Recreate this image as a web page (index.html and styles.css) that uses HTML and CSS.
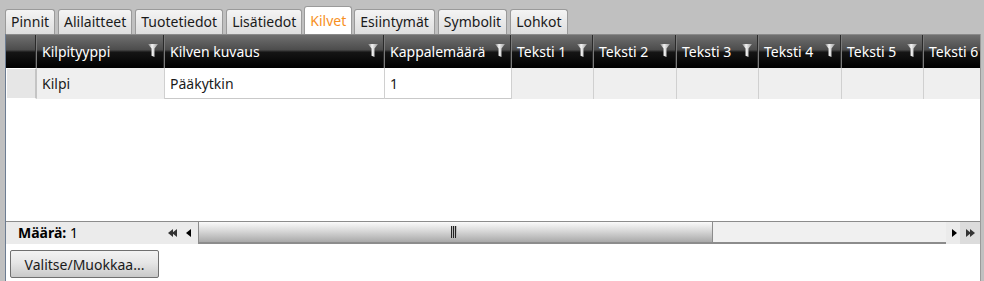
FILE: index.html
```html
<!DOCTYPE html>
<html lang="fi">
<head>
    <meta charset="UTF-8">
    <title>Kilvet</title>
    <link rel="stylesheet" href="styles.css">
</head>
<body>
<div class="window">
    <!-- tabs -->
    <div class="tabs">
        <div class="tab">Pinnit</div>
        <div class="tab">Alilaitteet</div>
        <div class="tab">Tuotetiedot</div>
        <div class="tab">Lisätiedot</div>
        <div class="tab active">Kilvet</div>
        <div class="tab">Esiintymät</div>
        <div class="tab">Symbolit</div>
        <div class="tab">Lohkot</div>
    </div>
    <div class="panel">
        <div class="grid">
            <div class="head-row">
                <div class="hcell"></div>
                <div class="hcell">Kilpityyppi<span class="filter"></span></div>
                <div class="hcell">Kilven kuvaus<span class="filter"></span></div>
                <div class="hcell">Kappalemäärä<span class="filter"></span></div>
                <div class="hcell">Teksti 1<span class="filter"></span></div>
                <div class="hcell">Teksti 2<span class="filter"></span></div>
                <div class="hcell">Teksti 3<span class="filter"></span></div>
                <div class="hcell">Teksti 4<span class="filter"></span></div>
                <div class="hcell">Teksti 5<span class="filter"></span></div>
                <div class="hcell">Teksti 6<span class="filter"></span></div>
            </div>
            <div class="data-row">
                <div class="cell indicator"></div>
                <div class="cell grey">Kilpi</div>
                <div class="cell">Pääkytkin</div>
                <div class="cell">1</div>
                <div class="cell grey"></div>
                <div class="cell grey"></div>
                <div class="cell grey"></div>
                <div class="cell grey"></div>
                <div class="cell grey"></div>
                <div class="cell grey"></div>
            </div>
            <div class="empty"></div>
            <div class="footer">
                <div class="count"><b>Määrä:</b> 1</div>
                <div class="sbtn first">
                    <svg width="10" height="8" viewBox="0 0 10 8"><path d="M0 4 L5 0 V8 Z M4 4 L9 0 V8 Z" fill="#333"/></svg>
                </div>
                <div class="sbtn">
                    <svg width="5" height="8" viewBox="0 0 5 8"><path d="M0 4 L5 0 V8 Z" fill="#000"/></svg>
                </div>
                <div class="track">
                    <div class="thumb"><span class="grip"></span></div>
                </div>
                <div class="sbtn">
                    <svg width="5" height="8" viewBox="0 0 5 8"><path d="M5 4 L0 0 V8 Z" fill="#000"/></svg>
                </div>
                <div class="sbtn last">
                    <svg width="10" height="8" viewBox="0 0 10 8"><path d="M10 4 L5 0 V8 Z M6 4 L1 0 V8 Z" fill="#333"/></svg>
                </div>
            </div>
        </div>
        <div class="actions">
            <button class="btn">Valitse/Muokkaa...</button>
        </div>
    </div>
</div>
</body>
</html>
```
FILE: styles.css
```css
body {
    margin: 0;
    font-family: "Segoe UI", "Noto Sans", "Open Sans", sans-serif;
    font-size: 14px;
    color: #1a1a1a;
}
.window {
    width: 984px;
    height: 281px;
    background: #c0c0c0;
    display: flex;
    flex-direction: column;
    padding-left: 5px;
    padding-right: 3px;
    box-sizing: border-box;
    overflow: hidden;
}
.tabs {
    height: 34px;
    display: flex;
    align-items: flex-end;
    gap: 3px;
    padding-left: 0;
    flex-shrink: 0;
}
.tab {
    height: 24px;
    line-height: 23px;
    padding: 0 5px;
    border: 1px solid #9a9a9a;
    border-bottom: none;
    border-radius: 3px 3px 0 0;
    background: linear-gradient(#f4f4f4, #dedede);
}
.tab.active {
    height: 27px;
    line-height: 28px;
    background: #fff;
    color: #f7901e;
    margin: 0 -1px;
}
.panel {
    flex: 1;
    background: #fff;
    border-left: 1px solid #6d7d92;
    border-right: 1px solid #9a9a9a;
    display: flex;
    flex-direction: column;
}
.grid {
    flex: 1;
    display: flex;
    flex-direction: column;
    overflow: hidden;
}
.head-row,
.data-row {
    display: grid;
    grid-template-columns: 31px 128px 220px 127px 82px 83px 82px 83px 82px 82px;
}
.head-row {
    height: 34px;
    background: linear-gradient(#707070 0%, #4c4c4c 45%, #151515 52%, #000 100%);
    border-top: 1px solid #8a8a8a;
    box-sizing: border-box;
}
.hcell {
    position: relative;
    color: #fff;
    line-height: 34px;
    padding-left: 5px;
    white-space: nowrap;
    border-right: 1px solid #7a7a7a;
    box-shadow: inset -1px 0 0 #2a2a2a;
    overflow: hidden;
}
.filter {
    position: absolute;
    right: 6px;
    top: 9px;
    width: 10px;
    height: 13px;
    background: linear-gradient(90deg, #7a7a7a, #f4f4f4 40%, #9a9a9a);
    clip-path: polygon(0 0, 100% 0, 65% 35%, 65% 100%, 35% 90%, 35% 35%);
}
.data-row {
    height: 31px;
    border-bottom: 1px solid #c9c9c9;
    box-sizing: border-box;
}
.cell {
    line-height: 31px;
    padding-left: 5px;
    border-right: 1px solid #d0d0d0;
    white-space: nowrap;
}
.cell.grey {
    background: #efefef;
}
.cell.indicator {
    background: #e6e6e6;
    border: 1px solid #fff;
    border-right: 2px solid #c4c4c4;
}
.empty {
    flex: 1;
}
.footer {
    height: 22px;
    display: flex;
    align-items: stretch;
    background: #ebebeb;
    border-top: 1px solid #8c8c8c;
    flex-shrink: 0;
}
.count {
    width: 146px;
    padding-left: 12px;
    line-height: 21px;
    color: #000;
}
.sbtn {
    width: 12px;
    display: flex;
    align-items: center;
    justify-content: center;
}
.sbtn.first {
    width: 18px;
}
.sbtn.last {
    width: 20px;
    background: #dcdcdc;
}
.track {
    flex: 1;
    margin: 0 2px 0 4px;
    background: #f0f0f0;
    border-left: 1px solid #8c8c8c;
    border-bottom: 2px solid #8c8c8c;
    display: flex;
}
.thumb {
    width: 513px;
    background: linear-gradient(#fafafa, #dcdcdc 40%, #a9a9a9);
    border-right: 1px solid #8c8c8c;
    position: relative;
}
.grip {
    position: absolute;
    left: 252px;
    top: 4px;
    width: 6px;
    height: 12px;
    background: repeating-linear-gradient(90deg, #222 0 1px, #bbb 1px 2px);
}
.actions {
    height: 37px;
    padding: 6px 0 0 4px;
    box-sizing: border-box;
    flex-shrink: 0;
}
.btn {
    width: 149px;
    height: 28px;
    font: inherit;
    color: #1a1a1a;
    border: 1px solid #707070;
    border-radius: 2px;
    background: linear-gradient(#f3f3f3, #e6e6e6 45%, #c9c9c9);
    padding: 0;
}
```
